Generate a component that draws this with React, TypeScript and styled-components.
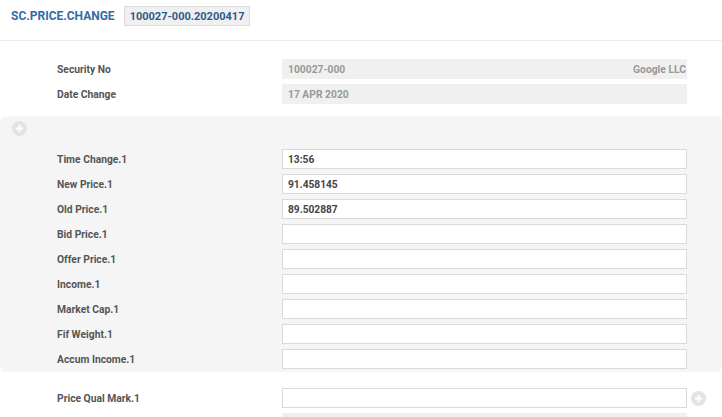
import styled, { createGlobalStyle } from "styled-components";

const GlobalStyle = createGlobalStyle`
  body {
    margin: 0;
    background: #fff;
    font-family: Roboto, "Liberation Sans", sans-serif;
  }
`;

const Page = styled.div`
  width: 722px;
  height: 417px;
  overflow: hidden;
`;

const Header = styled.div`
  display: flex;
  align-items: center;
  gap: 9px;
  height: 41px;
  padding: 0 0 0 11px;
  border-bottom: 1px solid #ececec;
  box-sizing: border-box;
`;

const Title = styled.h1`
  margin: 0;
  font-size: 12px;
  font-weight: 700;
  color: #2f6ca6;
  margin-top: -8px;
`;

const Badge = styled.span`
  display: inline-flex;
  align-items: center;
  height: 20px;
  padding: 0 5px;
  box-sizing: border-box;
  margin-top: -8px;
  background: #f0f0f0;
  border: 1px solid #dadada;
  font-size: 11px;
  font-weight: 700;
  color: #2d5a8c;
`;

const Block = styled.div`
  padding: 18px 0 12px;
`;

const Section = styled.div`
  background: #f5f5f5;
  border-radius: 6px;
  padding: 5px 0 3px;
`;

const AddIcon = styled.div<{ $side: "left" | "right" }>`
  width: 15px;
  height: 15px;
  margin-left: ${(p) => (p.$side === "left" ? "12px" : "4px")};
  margin-bottom: ${(p) => (p.$side === "left" ? "13px" : "0")};

  svg {
    display: block;
  }
`;

const Row = styled.div`
  display: grid;
  grid-template-columns: 282px 405px auto;
  align-items: center;
  height: 20px;
  margin-bottom: 5px;

  &:last-child {
    margin-bottom: 0;
  }
`;

const Label = styled.label`
  padding-left: 57px;
  font-size: 10.3px;
  font-weight: 700;
  color: #555;
`;

const ReadOnly = styled.div`
  display: flex;
  justify-content: space-between;
  align-items: center;
  height: 20px;
  padding: 0 1px 0 6px;
  box-sizing: border-box;
  background: #f0f0f0;
  font-size: 10.3px;
  font-weight: 700;
  color: #999;
`;

const Input = styled.input`
  height: 20px;
  width: 405px;
  box-sizing: border-box;
  padding: 0 5px;
  border: 1px solid #dadada;
  background: #fff;
  font-family: Roboto, "Liberation Sans", sans-serif;
  font-size: 10.2px;
  font-weight: 700;
  color: #444;
  outline: none;
`;

const Tail = styled.div`
  padding-top: 16px;
`;

const Plus = () => (
  <svg width="15" height="15" viewBox="0 0 15 15">
    <circle cx="7.5" cy="7.5" r="7.5" fill="#e3e3e3" />
    <path d="M7.5 3.8v7.4M3.8 7.5h7.4" stroke="#fff" strokeWidth="2" />
  </svg>
);

const fields = [
  { label: "Time Change.1", value: "13:56" },
  { label: "New Price.1", value: "91.458145" },
  { label: "Old Price.1", value: "89.502887" },
  { label: "Bid Price.1", value: "" },
  { label: "Offer Price.1", value: "" },
  { label: "Income.1", value: "" },
  { label: "Market Cap.1", value: "" },
  { label: "Fif Weight.1", value: "" },
  { label: "Accum Income.1", value: "" },
];

export default function App() {
  return (
    <Page>
      <GlobalStyle />
      <Header>
        <Title>SC.PRICE.CHANGE</Title>
        <Badge>100027-000.20200417</Badge>
      </Header>
      <Block>
        <Row>
          <Label>Security No</Label>
          <ReadOnly>
            <span>100027-000</span>
            <span>Google LLC</span>
          </ReadOnly>
        </Row>
        <Row>
          <Label>Date Change</Label>
          <ReadOnly>
            <span>17 APR 2020</span>
          </ReadOnly>
        </Row>
      </Block>
      <Section>
        <AddIcon $side="left">
          <Plus />
        </AddIcon>
        {fields.map((f) => (
          <Row key={f.label}>
            <Label>{f.label}</Label>
            <Input defaultValue={f.value} readOnly />
          </Row>
        ))}
      </Section>
      <Tail>
        <Row>
          <Label>Price Qual Mark.1</Label>
          <Input defaultValue="" readOnly />
          <AddIcon $side="right">
            <Plus />
          </AddIcon>
        </Row>
        <Row>
          <Label />
          <ReadOnly />
        </Row>
      </Tail>
    </Page>
  );
}
